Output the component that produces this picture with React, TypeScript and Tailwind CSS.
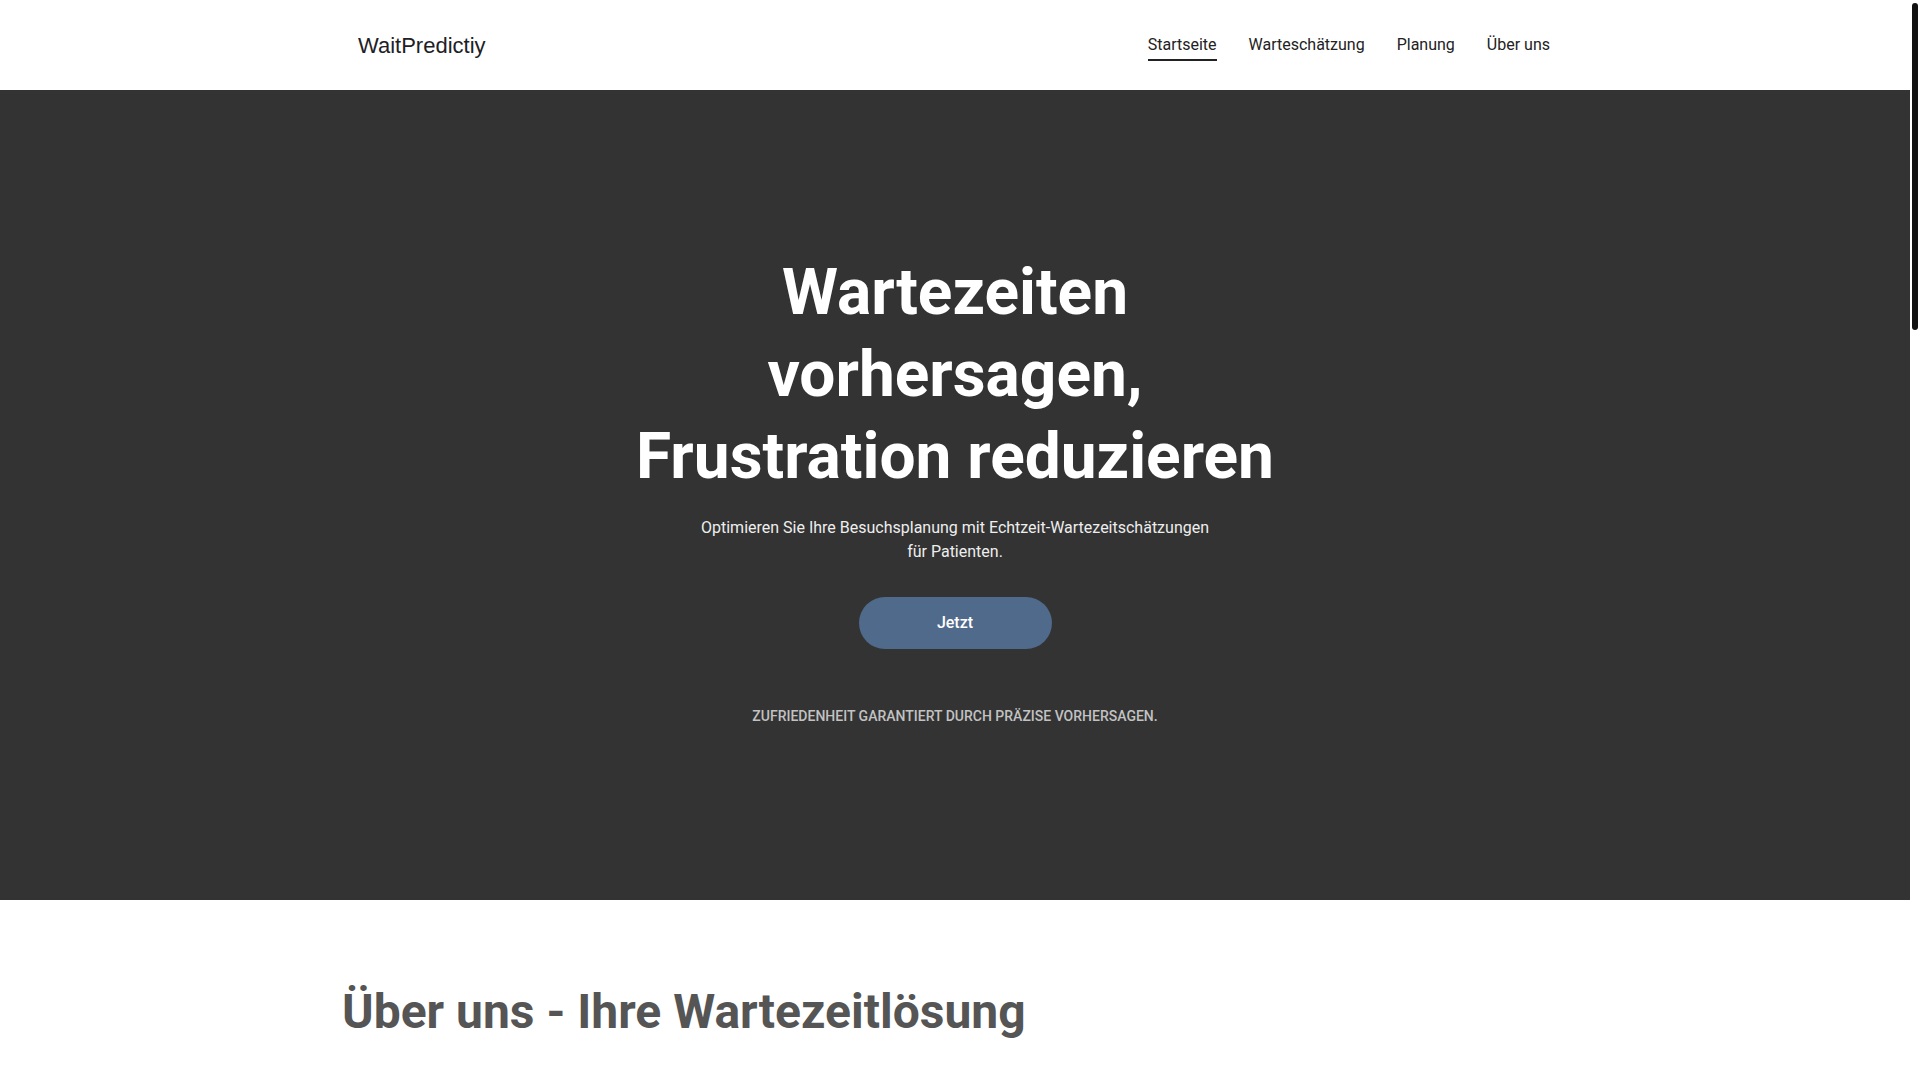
import React from "react";

const navItems = ["Startseite", "Warteschätzung", "Planung", "Über uns"];

function Header() {
  return (
    <header className="h-[90px] bg-white">
      <div className="mx-auto flex h-full w-[1200px] items-center justify-between">
        <a href="#" className="pl-[3px] text-[22px] text-[#1d2125] font-['Liberation_Sans',Arial,sans-serif]">
          WaitPredictiy
        </a>
        <nav className="flex items-center gap-8 pr-[5px] text-base text-[#222]">
          {navItems.map((item, i) => (
            <a
              key={item}
              href="#"
              className={
                i === 0
                  ? "border-b-2 border-[#222] pt-[4px] pb-[2px]"
                  : "border-b-2 border-transparent pt-[4px] pb-[2px]"
              }
            >
              {item}
            </a>
          ))}
        </nav>
      </div>
    </header>
  );
}

function Hero() {
  return (
    <section className="flex h-[810px] flex-col items-center bg-[#333333] pt-[162px] text-center">
      <h1 className="max-w-[700px] text-[64px] font-bold leading-[82px] text-white">
        Wartezeiten vorhersagen, Frustration reduzieren
      </h1>
      <p className="mt-[18px] max-w-[520px] text-base leading-6 text-[#eeeeee]">
        Optimieren Sie Ihre Besuchsplanung mit Echtzeit-Wartezeitschätzungen für Patienten.
      </p>
      <button className="mt-[33px] h-[52px] w-[193px] rounded-full bg-[#506a8b] text-base font-medium text-white">
        Jetzt
      </button>
      <p className="mt-[57px] text-sm font-medium uppercase leading-5 text-[#c2c2c2]">
        Zufriedenheit garantiert durch präzise Vorhersagen.
      </p>
    </section>
  );
}

function About() {
  return (
    <section className="bg-white">
      <div className="mx-auto w-[1226px] pt-[84px] pb-24">
        <h2 className="text-5xl font-bold leading-[56px] text-[#555555]">Über uns - Ihre Wartezeitlösung</h2>
        <p className="mt-16 max-w-[760px] text-lg leading-8 text-[#666]">
          WaitPredictiy hilft Kliniken und Praxen, Wartezeiten transparent zu machen. Patienten sehen in
          Echtzeit, wann sie an der Reihe sind, und können ihren Besuch entspannt planen.
        </p>
        <div className="mt-16 grid grid-cols-3 gap-8">
          {["Echtzeit-Daten", "Smarte Planung", "Zufriedene Patienten"].map((t) => (
            <div key={t} className="rounded-xl border border-gray-200 p-8">
              <h3 className="text-xl font-bold text-[#333]">{t}</h3>
              <p className="mt-3 text-base leading-7 text-[#666]">
                Präzise Vorhersagen auf Basis aktueller Auslastung und historischer Werte.
              </p>
            </div>
          ))}
        </div>
      </div>
    </section>
  );
}

function Estimate() {
  return (
    <section className="bg-[#f5f5f5]">
      <div className="mx-auto min-h-[900px] w-[1226px] py-24">
        <h2 className="text-5xl font-bold text-[#555555]">Warteschätzung</h2>
        <p className="mt-8 max-w-[760px] text-lg leading-8 text-[#666]">
          Wählen Sie Ihre Einrichtung und erhalten Sie sofort eine Schätzung der aktuellen Wartezeit.
        </p>
      </div>
    </section>
  );
}

function Planning() {
  return (
    <section className="bg-white">
      <div className="mx-auto min-h-[920px] w-[1226px] py-24">
        <h2 className="text-5xl font-bold text-[#555555]">Planung</h2>
        <p className="mt-8 max-w-[760px] text-lg leading-8 text-[#666]">
          Planen Sie Ihren Besuch zur besten Zeit und vermeiden Sie lange Wartezeiten.
        </p>
      </div>
    </section>
  );
}

function Footer() {
  return (
    <footer className="bg-[#333333]">
      <div className="mx-auto flex h-[200px] w-[1226px] items-center justify-between text-sm text-[#bbb]">
        <span>© 2024 WaitPredictiy</span>
        <span>Impressum · Datenschutz</span>
      </div>
    </footer>
  );
}

export default function App() {
  return (
    <div className="bg-white font-['Roboto',sans-serif]">
      <div className="mr-[10px]">
        <Header />
        <Hero />
        <About />
        <Estimate />
        <Planning />
        <Footer />
      </div>
      {/* scrollbar thumb */}
      <div className="fixed top-[3px] right-[2px] h-[327px] w-[6px] rounded-full bg-[#111]" />
    </div>
  );
}
